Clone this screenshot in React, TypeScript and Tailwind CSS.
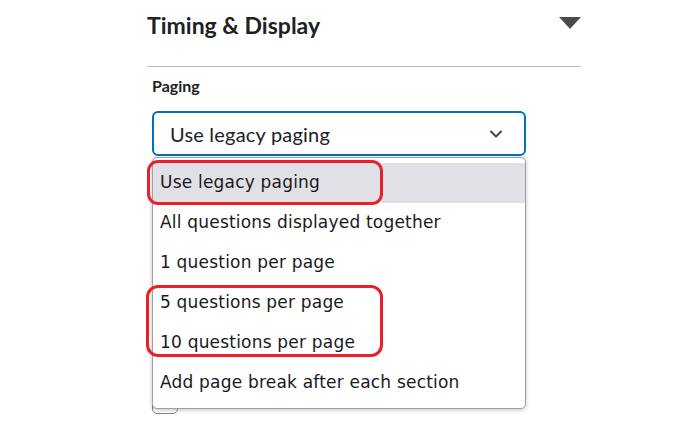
import { ChevronDown } from "lucide-react";

const options = [
  "Use legacy paging",
  "All questions displayed together",
  "1 question per page",
  "5 questions per page",
  "10 questions per page",
  "Add page break after each section",
];

export default function App() {
  return (
    <div className="relative w-[680px] h-[424px] overflow-hidden bg-white text-[#202122]" style={{ fontFamily: "Lato, sans-serif" }}>
      {/* Section */}
      <div className="ml-[147px] w-[434px]">
        <div className="flex items-center justify-between pt-[0px] h-[50px]">
          <h2 className="text-[23px] font-bold leading-none">Timing &amp; Display</h2>
          <svg width="22" height="12" viewBox="0 0 22 12" className="mt-[-4px]">
            <path d="M0 0h22L11 12z" fill="#494c4e" />
          </svg>
        </div>
        <div className="mt-[16px] h-px bg-[#b4bcc4]" />
        <div className="pl-[5px] pt-[10px]">
          <div className="text-[16px] font-bold leading-[18px]">Paging</div>
          <div className="mt-[16px] flex h-[45px] w-[374px] items-center justify-between rounded-[6px] border-2 border-[#006fbf] pl-[16px] pr-[18px]">
            <span className="text-[20px] tracking-[0.2px]">Use legacy paging</span>
            <ChevronDown size={20} strokeWidth={2.5} className="text-[#494c4e]" />
          </div>
          <div className="mt-[244px] h-[14px] w-[26px] rounded-b-[5px] border border-[#888]" />
        </div>
      </div>

      {/* Open dropdown list */}
      <div
        className="absolute left-[152px] top-[157px] w-[374px] rounded-[5px] border border-[#a0a0a0] bg-white py-[5px] shadow-[0_1px_4px_rgba(0,0,0,0.25)]"
        style={{ fontFamily: "'DejaVu Sans', sans-serif" }}
      >
        {options.map((o, i) => (
          <div
            key={o}
            className={`flex h-[40px] items-center pl-[7px] text-[17px] tracking-[0.2px] text-[#1a1a1a] ${i === 0 ? "bg-[#e0e0e6]" : ""}`}
          >
            {o}
          </div>
        ))}
      </div>

      {/* Annotation highlights */}
      <div className="absolute left-[147px] top-[160px] h-[45px] w-[236px] rounded-[11px] border-[3px] border-[#e8202a]" />
      <div className="absolute left-[146px] top-[285px] h-[72px] w-[237px] rounded-[12px] border-[3px] border-[#e8202a]" />
    </div>
  );
}
